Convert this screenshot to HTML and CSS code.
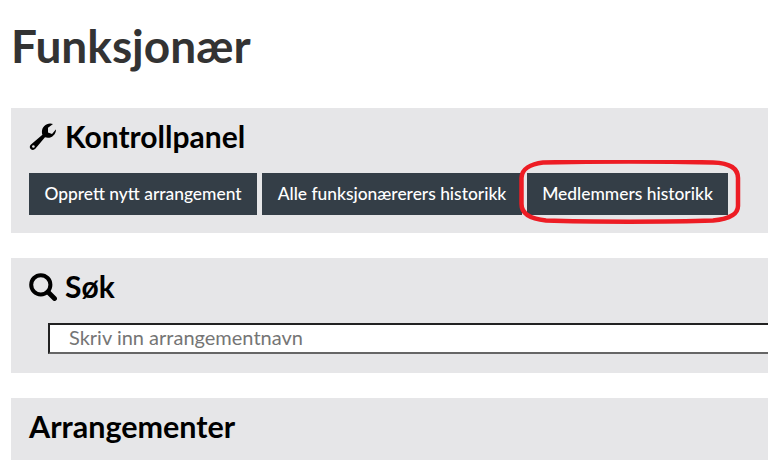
FILE: index.html
```html
<!DOCTYPE html>
<html>
<head>
    <title>Funksjonær</title>
    <meta charset="utf-8">
    <meta name="viewport" content="width=device-width, initial-scale=1">
    <link rel="stylesheet" href="styles.css">
</head>
<body>
    <h1 class="page-title">Funksjonær</h1>

    <section class="panel panel-control">
        <h2 class="panel-title">
            <svg class="icon" viewBox="0 0 28 28"><path d="M27 6.500c0 4.600-3.700 8.300-8.200 8.300-1 0-1.900-.2-2.800-.5L6.300 25.800c-1.300 1.500-3.300 1.500-4.600.2-1.300-1.300-1.200-3.300.3-4.600l11.400-9.700c-.3-.9-.5-1.800-.5-2.800C12.900 4.200 16.600.5 21.200.5c1 0 2 .2 2.800.5l-5 3.800v4.600l4 1.700 3.800-4.700c.1.200.2.400.2.600z"/><circle cx="4.400" cy="23.500" r="1.300" fill="#e6e6e8"/></svg>
            Kontrollpanel
        </h2>
        <div class="buttons">
            <a class="btn btn-create">Opprett nytt arrangement</a>
            <a class="btn btn-all">Alle funksjonærerers historikk</a>
            <a class="btn btn-members">Medlemmers historikk</a>
        </div>
    </section>

    <section class="panel panel-search">
        <h2 class="panel-title">
            <svg class="icon" viewBox="0 0 28 28"><circle cx="11.800" cy="11.800" r="9.600" fill="none" stroke="#000" stroke-width="4"/><path d="M19 19l6.500 6.500" fill="none" stroke="#000" stroke-width="4.800" stroke-linecap="round"/></svg>
            Søk
        </h2>
        <input class="search-input" type="text" placeholder="Skriv inn arrangementnavn">
    </section>

    <section class="panel panel-events">
        <h2 class="panel-title">Arrangementer</h2>
    </section>

    <svg class="highlight" viewBox="0 0 223 64"><path d="M24 2.500C70 1.500 150 1.500 194 2.500 210 3 219 8 219 18V46C219 54 210 59 194 60.500 150 62 70 62 27 60.500 12 59 2.500 54 2.500 44V18C2.500 9 12 4 24 2.500z"/></svg>
</body>
</html>
```

FILE: styles.css
```css
html, body {
    margin: 0;
    overflow: hidden;
}
body {
    height: 460px;
    padding-left: 11px;
    box-sizing: border-box;
    font-family: "Lato", "Liberation Sans", sans-serif;
    background: #fff;
}
.page-title {
    margin: 0;
    height: 108px;
    padding-top: 20px;
    box-sizing: border-box;
    font-size: 46px;
    line-height: 52px;
    font-weight: 700;
    color: #333;
}
.panel {
    background: #e6e6e8;
    padding: 12px 0 0 18px;
    box-sizing: border-box;
}
.panel + .panel { margin-top: 25px; }
.panel-control { height: 125px; }
.panel-search { height: 115px; }
.panel-events { height: 62px; }
.panel-title {
    margin: 0;
    display: flex;
    align-items: center;
    gap: 8px;
    height: 33px;
    font-size: 30px;
    line-height: 33px;
    font-weight: 700;
    color: #000;
}
.panel-events .panel-title { font-size: 30.500px; }
.icon {
    width: 28px;
    height: 28px;
    flex: none;
}
.buttons {
    display: flex;
    gap: 5px;
    margin-top: 20px;
}
.btn {
    height: 42px;
    line-height: 41px;
    text-align: center;
    background: #343e47;
    color: #fff;
    font-size: 17.400px;
    font-weight: 500;
}
.btn-create { width: 228px; }
.btn-all { width: 260px; }
.btn-members { width: 201px; }
.search-input {
    display: block;
    width: calc(100% - 19px);
    height: 31px;
    margin: 20px 0 0 19px;
    padding: 0 19px 3px;
    box-sizing: border-box;
    border: 2px solid #222;
    border-right: 0;
    border-bottom-color: #666;
    background: #fff;
    font-family: inherit;
    font-size: 20px;
}
.search-input::placeholder {
    color: #757575;
    opacity: 1;
}
.highlight {
    position: absolute;
    left: 519px;
    top: 160px;
    width: 223px;
    height: 64px;
}
.highlight path {
    fill: none;
    stroke: #ed1c24;
    stroke-width: 4.500;
}
```
